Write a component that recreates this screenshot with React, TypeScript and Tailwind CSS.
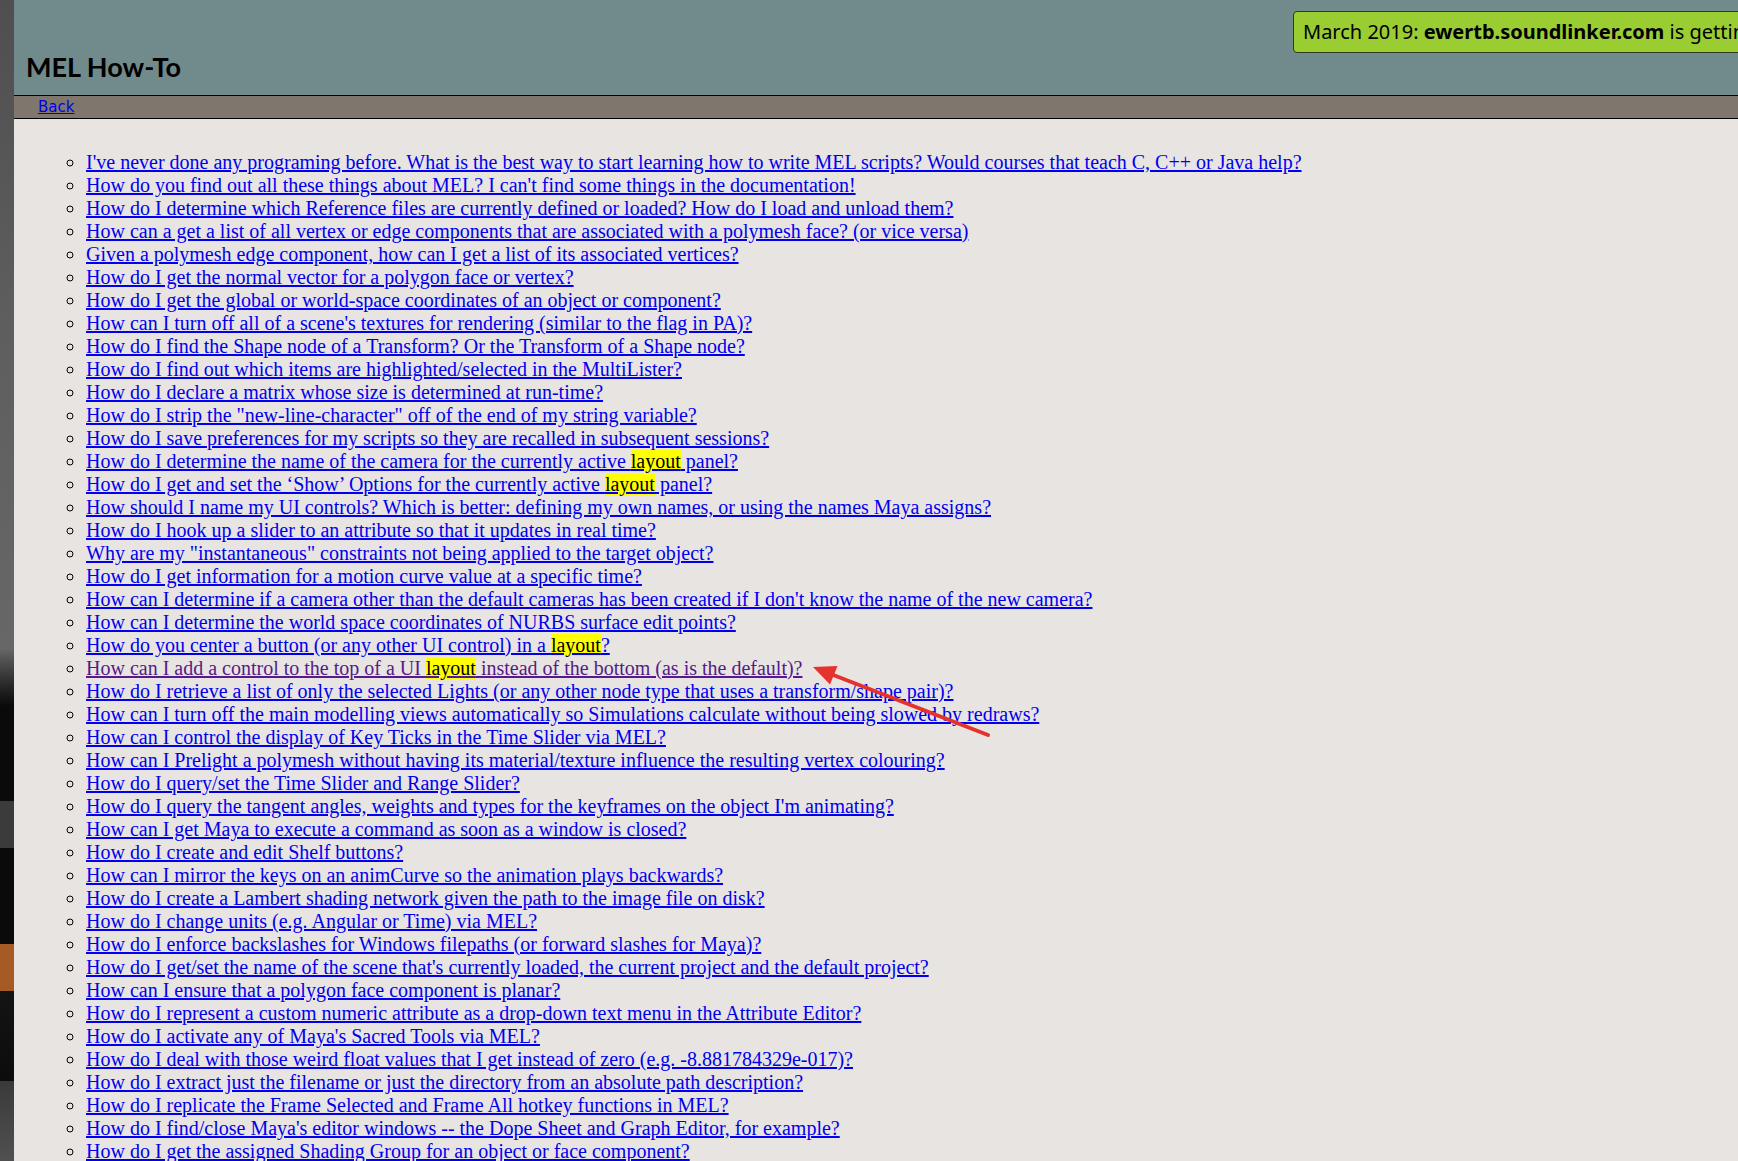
import * as React from "react"

const questions: { text: string; hl?: [string, string]; visited?: boolean }[] = [
  { text: "I've never done any programing before. What is the best way to start learning how to write MEL scripts? Would courses that teach C, C++ or Java help?" },
  { text: "How do you find out all these things about MEL? I can't find some things in the documentation!" },
  { text: "How do I determine which Reference files are currently defined or loaded? How do I load and unload them?" },
  { text: "How can a get a list of all vertex or edge components that are associated with a polymesh face? (or vice versa)" },
  { text: "Given a polymesh edge component, how can I get a list of its associated vertices?" },
  { text: "How do I get the normal vector for a polygon face or vertex?" },
  { text: "How do I get the global or world-space coordinates of an object or component?" },
  { text: "How can I turn off all of a scene's textures for rendering (similar to the flag in PA)?" },
  { text: "How do I find the Shape node of a Transform? Or the Transform of a Shape node?" },
  { text: "How do I find out which items are highlighted/selected in the MultiLister?" },
  { text: "How do I declare a matrix whose size is determined at run-time?" },
  { text: "How do I strip the \"new-line-character\" off of the end of my string variable?" },
  { text: "How do I save preferences for my scripts so they are recalled in subsequent sessions?" },
  { text: "", hl: ["How do I determine the name of the camera for the currently active ", " panel?"] },
  { text: "", hl: ["How do I get and set the \u2018Show\u2019 Options for the currently active ", " panel?"] },
  { text: "How should I name my UI controls? Which is better: defining my own names, or using the names Maya assigns?" },
  { text: "How do I hook up a slider to an attribute so that it updates in real time?" },
  { text: "Why are my \"instantaneous\" constraints not being applied to the target object?" },
  { text: "How do I get information for a motion curve value at a specific time?" },
  { text: "How can I determine if a camera other than the default cameras has been created if I don't know the name of the new camera?" },
  { text: "How can I determine the world space coordinates of NURBS surface edit points?" },
  { text: "", hl: ["How do you center a button (or any other UI control) in a ", "?"] },
  { text: "", hl: ["How can I add a control to the top of a UI ", " instead of the bottom (as is the default)?"], visited: true },
  { text: "How do I retrieve a list of only the selected Lights (or any other node type that uses a transform/shape pair)?" },
  { text: "How can I turn off the main modelling views automatically so Simulations calculate without being slowed by redraws?" },
  { text: "How can I control the display of Key Ticks in the Time Slider via MEL?" },
  { text: "How can I Prelight a polymesh without having its material/texture influence the resulting vertex colouring?" },
  { text: "How do I query/set the Time Slider and Range Slider?" },
  { text: "How do I query the tangent angles, weights and types for the keyframes on the object I'm animating?" },
  { text: "How can I get Maya to execute a command as soon as a window is closed?" },
  { text: "How do I create and edit Shelf buttons?" },
  { text: "How can I mirror the keys on an animCurve so the animation plays backwards?" },
  { text: "How do I create a Lambert shading network given the path to the image file on disk?" },
  { text: "How do I change units (e.g. Angular or Time) via MEL?" },
  { text: "How do I enforce backslashes for Windows filepaths (or forward slashes for Maya)?" },
  { text: "How do I get/set the name of the scene that's currently loaded, the current project and the default project?" },
  { text: "How can I ensure that a polygon face component is planar?" },
  { text: "How do I represent a custom numeric attribute as a drop-down text menu in the Attribute Editor?" },
  { text: "How do I activate any of Maya's Sacred Tools via MEL?" },
  { text: "How do I deal with those weird float values that I get instead of zero (e.g. -8.881784329e-017)?" },
  { text: "How do I extract just the filename or just the directory from an absolute path description?" },
  { text: "How do I replicate the Frame Selected and Frame All hotkey functions in MEL?" },
  { text: "How do I find/close Maya's editor windows -- the Dope Sheet and Graph Editor, for example?" },
  { text: "How do I get the assigned Shading Group for an object or face component?" },
]

function DesktopStrip() {
  // bit of the desktop showing on the left of the browser window
  return (
    <div className="flex w-[14px] shrink-0 flex-col">
      <div className="h-[650px] bg-gradient-to-b from-[#4f4f4f] via-[#5e5e5e] to-[#676767]" />
      <div className="h-[55px] bg-gradient-to-b from-[#646464] to-[#0c0c0c]" />
      <div className="h-[96px] bg-[#0a0a0a]" />
      <div className="h-[47px] bg-[#3b3b3b]" />
      <div className="h-[96px] bg-[#0a0a0a]" />
      <div className="h-[47px] bg-[#a65a25]" />
      <div className="h-[90px] bg-gradient-to-b from-[#141414] to-[#0c0c0c]" />
      <div className="flex-1 bg-gradient-to-b from-[#3a3a3a] to-[#505050]" />
    </div>
  )
}

export default function App() {
  return (
    <div className="relative flex h-[1161px] w-[1738px] overflow-hidden bg-[#e8e4e1]">
      <DesktopStrip />
      <div className="flex min-w-0 flex-1 flex-col">
        <header className="relative h-[95px] shrink-0 bg-[#718a8b]">
          <h1 className="pl-[12px] pt-[53px] font-['Lato',sans-serif] text-[27px] font-bold leading-none text-black">
            MEL How-To
          </h1>
          <div className="absolute left-[1279px] top-[11px] flex h-[42px] items-center whitespace-nowrap rounded-[4px] border border-[#2f3d1c] bg-[#9acd32] pl-[9px] pr-4 font-['Noto_Sans',sans-serif] text-[20px] text-black">
            March 2019:&nbsp;<b>ewertb.soundlinker.com</b>&nbsp;is getting a new home
          </div>
        </header>
        <nav className="h-[24px] shrink-0 border-y border-black bg-[#7f766d] pl-[24px] font-['DejaVu_Sans',sans-serif] text-[15px] leading-[23px]">
          <a href="#" className="text-[#0000ee] underline">Back</a>
        </nav>
        <ul className="list-[circle] pl-[72px] pt-[32px] font-['Liberation_Serif',serif] text-[20px] leading-[23px] text-black">
          {questions.map((q, i) => (
            <li key={i} className="whitespace-nowrap">
              <a
                href="#"
                className={q.visited ? "text-[#551a8b] underline" : "text-[#0000ee] underline"}
              >
                {q.hl ? (
                  <>
                    {q.hl[0]}
                    <span className="bg-[#ffff00] text-black">layout</span>
                    {q.hl[1]}
                  </>
                ) : (
                  q.text
                )}
              </a>
            </li>
          ))}
        </ul>
      </div>
      <svg
        className="pointer-events-none absolute left-[800px] top-[655px]"
        width="200"
        height="90"
        viewBox="800 655 200 90"
      >
        <line x1="832" y1="674.5" x2="988" y2="735" stroke="#e5322d" strokeWidth="4" strokeLinecap="round" />
        <polygon points="813,667 837.5,666 830,684.5" fill="#e5322d" />
      </svg>
    </div>
  )
}
